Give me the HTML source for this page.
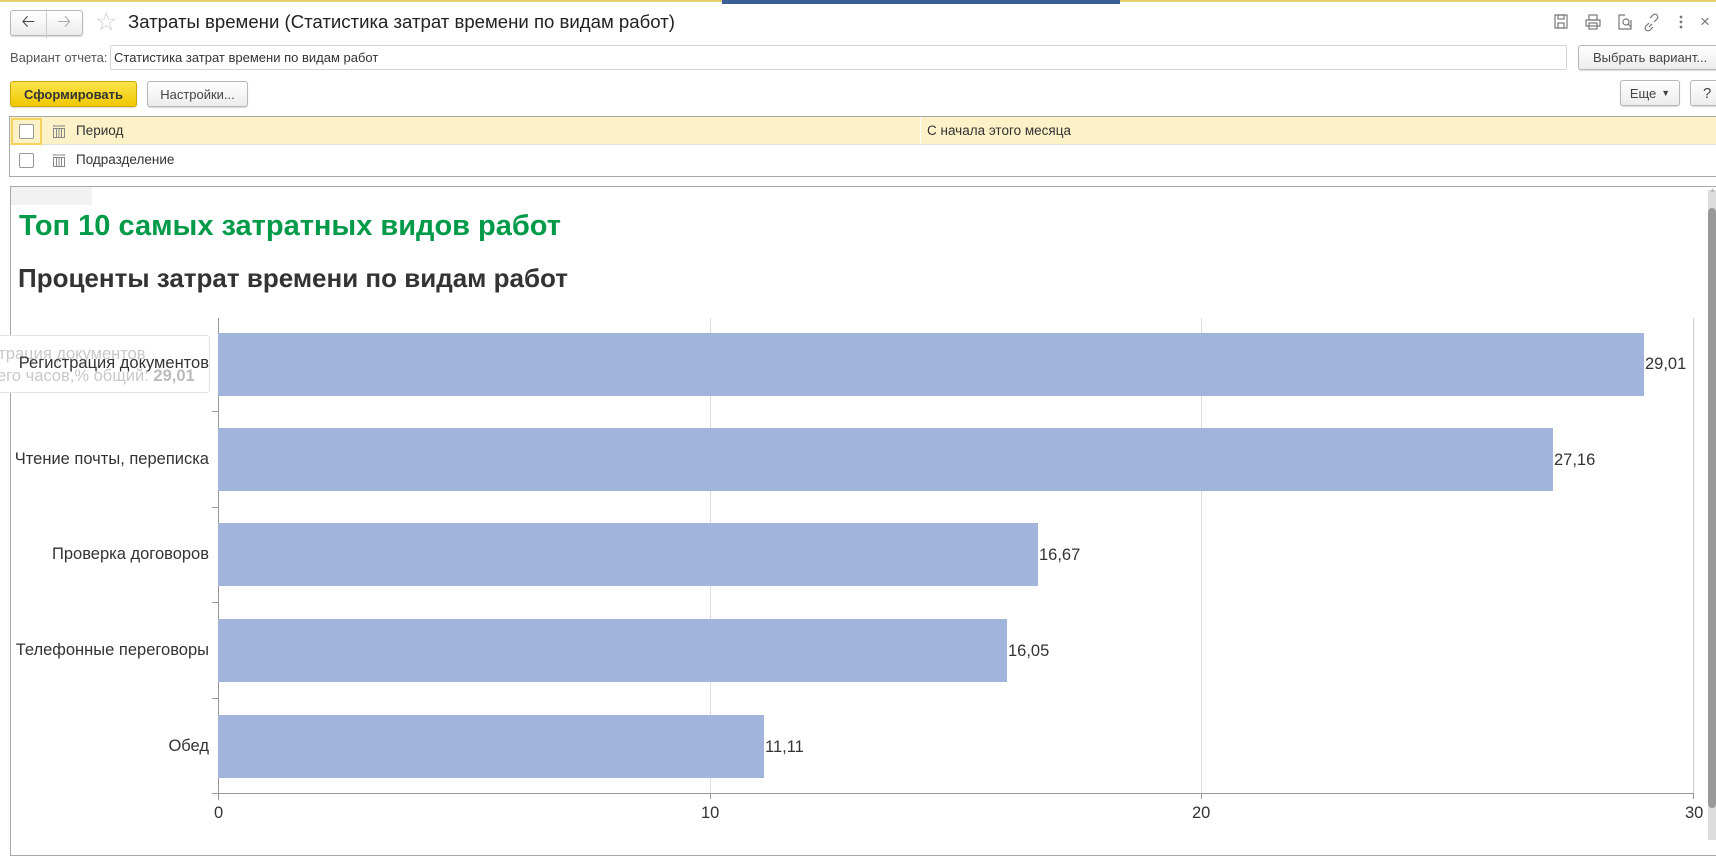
<!DOCTYPE html>
<html><head><meta charset="utf-8"><style>
*{box-sizing:border-box;margin:0;padding:0}
body{width:1716px;height:844px;overflow:hidden;background:#fff;font-family:"Liberation Sans",Arial,sans-serif;position:relative;color:#333}
.a{position:absolute}
.btn{position:absolute;border:1px solid #b8b8b8;border-radius:3px;background:linear-gradient(#fff,#ececec);font-size:13px;color:#444;display:flex;align-items:center;justify-content:center;box-shadow:0 1px 1px rgba(0,0,0,.15)}
.lbl{position:absolute;right:1507px;font-size:16.5px;color:#333;white-space:nowrap;text-align:right}
.val{position:absolute;font-size:16.5px;color:#333}
.bar{position:absolute;left:218px;background:#a1b4db;height:63px}
</style></head><body>
<div class="a" style="left:0;top:0;width:1716px;height:2px;background:#e6cf6a"></div>
<div class="a" style="left:722px;top:0;width:398px;height:4px;background:#3a5f96"></div>

<div class="btn" style="left:10px;top:10px;width:73px;height:26px;font-size:17px;color:#444"><span style="width:36px;text-align:center;border-right:1px solid #ccc">&#129120;</span><span style="width:36px;text-align:center;color:#aaa">&#129122;</span></div>
<div class="a" style="left:95px;top:7px;font-size:25px;color:#ccc">☆</div>
<div class="a" style="left:128px;top:11px;font-size:18.6px;color:#222">Затраты времени (Статистика затрат времени по видам работ)</div>
<svg class="a" style="left:1550px;top:12px" width="166" height="20" fill="none" stroke="#777" stroke-width="1.2">
<rect x="5" y="3" width="12" height="13"/><rect x="8" y="3" width="6" height="4"/><rect x="8" y="11" width="6" height="5"/>
<g transform="translate(-7,0)"><rect x="43" y="8" width="14" height="6"/><rect x="46" y="3" width="8" height="5"/><rect x="46" y="11" width="8" height="6"/></g>
<g transform="translate(-13,0)"><path d="M88 3h-6v14h12v-9"/><circle cx="89" cy="10" r="3"/><path d="M91 12l3 3"/></g>
<path d="M103 13l-3 3a2.5 2.5 0 0 1-4-4l3-3M104 8l3-3a2.5 2.5 0 0 0-4-4l-3 3M102 10l-3 3" transform="translate(0,2)"/>
<circle cx="131" cy="5" r=".8" fill="#777"/><circle cx="131" cy="10" r=".8" fill="#777"/><circle cx="131" cy="15" r=".8" fill="#777"/>
</svg>
<div class="a" style="left:1700px;top:12px;font-size:17px;color:#777">×</div>

<div class="a" style="left:10px;top:50px;font-size:13px;color:#555">Вариант отчета:</div>
<div class="a" style="left:110px;top:45px;width:1457px;height:25px;border:1px solid #d4d4d4;border-radius:2px;font-size:13px;padding:4px 3px;color:#333">Статистика затрат времени по видам работ</div>
<div class="btn" style="left:1578px;top:45px;width:150px;height:25px;justify-content:flex-start;padding-left:14px">Выбрать вариант...</div>

<div class="btn" style="left:10px;top:81px;width:127px;height:26px;background:linear-gradient(#fbe34c,#f0c800);border-color:#c9a800;color:#333;font-weight:bold">Сформировать</div>
<div class="btn" style="left:147px;top:81px;width:101px;height:26px">Настройки...</div>
<div class="btn" style="left:1620px;top:80px;width:60px;height:26px">Еще <span style="font-size:9px;margin-left:5px">▼</span></div>
<div class="btn" style="left:1690px;top:80px;width:40px;height:26px;justify-content:flex-start;padding-left:12px;font-size:15px">?</div>

<div class="a" style="left:9px;top:116px;width:1720px;height:61px;border:1px solid #a8a8a8"></div>
<div class="a" style="left:10px;top:117px;width:1710px;height:28px;background:#fdf1c8;border-bottom:1px solid #e0e0e0"></div>
<div class="a" style="left:11px;top:118px;width:31px;height:27px;border:2px solid #f5d35a"></div>
<div class="a" style="left:19px;top:124px;width:15px;height:15px;border:1px solid #999;background:#fff;border-radius:2px"></div>
<div class="a" style="left:19px;top:153px;width:15px;height:15px;border:1px solid #999;background:#fff;border-radius:2px"></div>
<div class="a" style="left:920px;top:117px;width:1px;height:27px;background:#fff"></div>
<svg class="a" style="left:52px;top:124px" width="14" height="44" stroke="#888" fill="none" stroke-width="1"><g id="ic"><path d="M1 2h12M2 1v1M12 1v1"/><rect x="1.5" y="4.5" width="11" height="9"/><path d="M4.5 4v10M7 4v10M9.5 4v10"/></g><use href="#ic" y="29"/></svg>
<div class="a" style="left:76px;top:123px;font-size:13.5px;color:#333">Период</div>
<div class="a" style="left:76px;top:152px;font-size:13.5px;color:#333">Подразделение</div>
<div class="a" style="left:927px;top:123px;font-size:13.5px;color:#333">С начала этого месяца</div>

<div class="a" style="left:10px;top:186px;width:1720px;height:670px;border:1px solid #a8a8a8"></div>
<div class="a" style="left:11px;top:187px;width:81px;height:18px;background:#f2f2f2"></div>
<div class="a" style="left:1708px;top:190px;width:8px;height:650px;background:#ddd"></div>
<div class="a" style="left:1708px;top:208px;width:8px;height:600px;background:#999;border-radius:4px"></div>
<div class="a" style="left:1709px;top:187px;font-size:7px;color:#bbb">▲</div>

<div class="a" style="left:19px;top:210px;font-size:29px;font-weight:bold;color:#009a48">Топ 10 самых затратных видов работ</div>
<div class="a" style="left:18px;top:263px;font-size:26px;font-weight:bold;color:#333">Проценты затрат времени по видам работ</div>

<div class="a" style="left:710px;top:318px;width:1px;height:475px;background:#ddd"></div>
<div class="a" style="left:1201px;top:318px;width:1px;height:475px;background:#ddd"></div>
<div class="a" style="left:1693px;top:318px;width:1px;height:475px;background:#ccc"></div>
<div class="a" style="left:218px;top:318px;width:1px;height:482px;background:#999"></div>
<div class="a" style="left:212px;top:793px;width:1482px;height:1px;background:#999"></div>
<div class="a" style="left:710px;top:793px;width:1px;height:6px;background:#999"></div>
<div class="a" style="left:1201px;top:793px;width:1px;height:6px;background:#999"></div>
<div class="a" style="left:1693px;top:793px;width:1px;height:6px;background:#999"></div>
<div class="a" style="left:212px;top:411px;width:6px;height:1px;background:#999"></div>
<div class="a" style="left:212px;top:507px;width:6px;height:1px;background:#999"></div>
<div class="a" style="left:212px;top:602px;width:6px;height:1px;background:#999"></div>
<div class="a" style="left:212px;top:698px;width:6px;height:1px;background:#999"></div>

<div class="a" style="left:-2px;top:335px;width:212px;height:58px;border:1px solid #e4e4e4;border-radius:3px;background:#fff"></div>
<div class="a" style="left:-10px;top:345px;font-size:16.5px;color:#c8c8c8;white-space:nowrap">страция документов</div>
<div class="a" style="left:-3px;top:367px;font-size:16.5px;color:#c8c8c8;white-space:nowrap">его часов,% общий: <b style="color:#bbb">29,01</b></div>

<div class="bar" style="top:333px;width:1426px"></div>
<div class="bar" style="top:428px;width:1335px"></div>
<div class="bar" style="top:523px;width:820px"></div>
<div class="bar" style="top:619px;width:789px"></div>
<div class="bar" style="top:715px;width:546px"></div>

<div class="lbl" style="top:354px">Регистрация документов</div>
<div class="lbl" style="top:450px">Чтение почты, переписка</div>
<div class="lbl" style="top:545px">Проверка договоров</div>
<div class="lbl" style="top:641px">Телефонные переговоры</div>
<div class="lbl" style="top:737px">Обед</div>

<div class="val" style="left:1645px;top:355px">29,01</div>
<div class="val" style="left:1554px;top:451px">27,16</div>
<div class="val" style="left:1039px;top:546px">16,67</div>
<div class="val" style="left:1008px;top:642px">16,05</div>
<div class="val" style="left:765px;top:738px">11,11</div>

<div class="val" style="left:214px;top:804px">0</div>
<div class="val" style="left:701px;top:804px">10</div>
<div class="val" style="left:1192px;top:804px">20</div>
<div class="val" style="left:1685px;top:804px">30</div>
</body></html>
